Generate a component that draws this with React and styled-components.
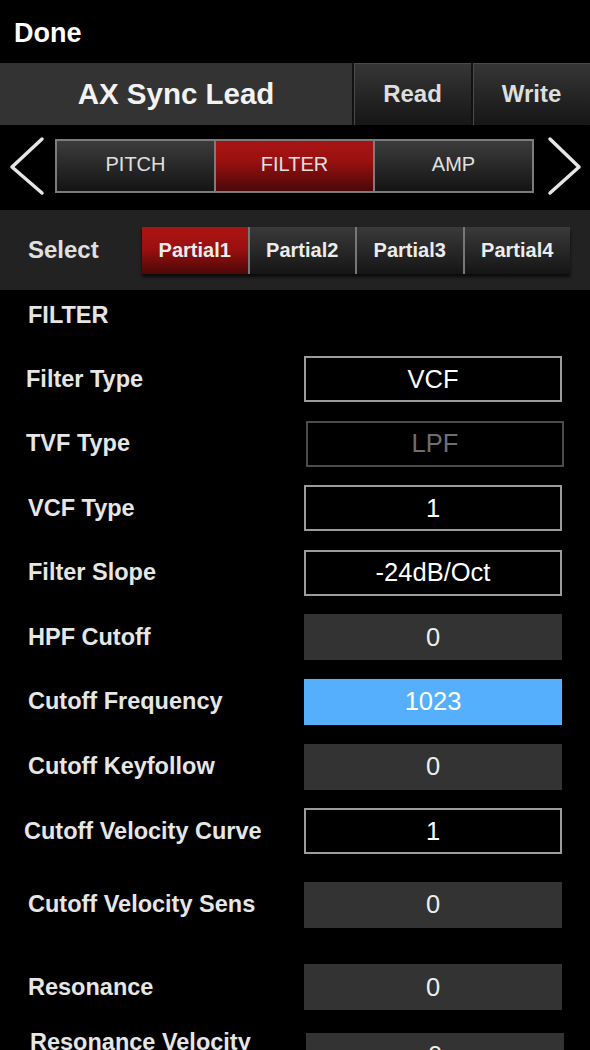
import React from "react";
import styled, { createGlobalStyle } from "styled-components";

const GlobalStyle = createGlobalStyle`
    body {
        margin: 0;
        background: #000;
        font-family: "Liberation Sans", Arial, sans-serif;
    }
`;

const Screen = styled.div`
    width: 590px;
    height: 1050px;
    overflow: hidden;
    background: #000;
    color: #e8e8e8;
`;

const TopBar = styled.div`
    height: 63px;
    display: flex;
    align-items: center;
    padding-left: 14px;
    padding-top: 3px;
    box-sizing: border-box;
    font-size: 27px;
    font-weight: bold;
    color: #fff;
`;

const Header = styled.div`
    height: 62px;
    display: flex;
    background: #333;
`;

const Title = styled.div`
    flex: 1;
    display: flex;
    align-items: center;
    justify-content: center;
    font-size: 29.5px;
    font-weight: bold;
    color: #f2f2f2;
`;

const HeaderButton = styled.div`
    width: 117px;
    display: flex;
    align-items: center;
    justify-content: center;
    border-left: 2px solid #111;
    box-shadow: inset 1px 1px 0 #4a4a4a;
    background: linear-gradient(#363636, #161616);
    font-size: 24px;
    font-weight: bold;
    color: #dedede;
`;

const NavRow = styled.div`
    height: 85px;
    display: flex;
    align-items: center;
    background: #000;
`;

const Arrow = styled.svg`
    flex: none;
    display: block;
`;

const TabStrip = styled.div`
    width: 479px;
    height: 54px;
    box-sizing: border-box;
    margin-bottom: 3px;
    display: flex;
    border: 2px solid #7c7c7c;
    background: #7c7c7c;
    gap: 2px;
`;

const Tab = styled.div`
    flex: 1;
    display: flex;
    align-items: center;
    justify-content: center;
    padding-bottom: 3px;
    font-size: 20px;
    color: #e0e0e0;
    background: ${(p) =>
        p.$active
            ? "linear-gradient(#a81414 0%, #9a1010 40%, #4a0808 100%)"
            : "linear-gradient(#3c3c3c, #141414)"};
`;

const SelectRow = styled.div`
    height: 80px;
    display: flex;
    align-items: center;
    background: #222;
`;

const SelectLabel = styled.div`
    width: 142px;
    box-sizing: border-box;
    padding-left: 28px;
    font-size: 24px;
    font-weight: bold;
    color: #e0e0e0;
`;

const PartialStrip = styled.div`
    width: 428px;
    height: 47px;
    display: flex;
    background: #777;
    gap: 2px;
    box-shadow: 0 3px 3px rgba(0, 0, 0, 0.7);
`;

const Partial = styled.div`
    flex: 1;
    display: flex;
    align-items: center;
    justify-content: center;
    font-size: 20px;
    font-weight: bold;
    color: #ececec;
    background: ${(p) =>
        p.$active
            ? "linear-gradient(#ac1414 0%, #9c1010 45%, #4c0808 100%)"
            : "linear-gradient(#3a3a3a, #151515)"};
`;

const SectionTitle = styled.div`
    height: 50px;
    line-height: 50px;
    padding-left: 28px;
    font-size: 23.5px;
    font-weight: bold;
    color: #e4e4e4;
`;

const ParamList = styled.div`
    padding-top: 16px;
    display: flex;
    flex-direction: column;
    gap: 18.6px;
`;

const ParamRow = styled.div`
    display: flex;
    align-items: center;
    margin-top: ${(p) => p.$extra || 0}px;
`;

const Label = styled.div`
    width: 304px;
    box-sizing: border-box;
    padding-left: ${(p) => p.$indent}px;
    padding-right: 30px;
    font-size: 23.5px;
    font-weight: bold;
    line-height: 27px;
    color: #e6e6e6;
`;

const boxLook = {
    outline: "background: #000; border: 2px solid #9c9c9c; color: #fff;",
    disabled: "background: #000; border: 2px solid #4c4c4c; color: #6e6e6e;",
    filled: "background: #333; border: 2px solid #333; color: #eee;",
    active: "background: #55affd; border: 2px solid #55affd; color: #fff;",
};

const ValueBox = styled.div`
    width: 258px;
    height: 46px;
    box-sizing: border-box;
    margin-left: ${(p) => p.$shift || 0}px;
    display: flex;
    align-items: center;
    justify-content: center;
    font-size: 25.5px;
    ${(p) => boxLook[p.$kind]}
`;

const params = [
    { label: "Filter Type", value: "VCF", kind: "outline", indent: 26 },
    { label: "TVF Type", value: "LPF", kind: "disabled", indent: 26, shift: 2 },
    { label: "VCF Type", value: "1", kind: "outline", indent: 28 },
    { label: "Filter Slope", value: "-24dB/Oct", kind: "outline", indent: 28 },
    { label: "HPF Cutoff", value: "0", kind: "filled", indent: 28 },
    { label: "Cutoff Frequency", value: "1023", kind: "active", indent: 28 },
    { label: "Cutoff Keyfollow", value: "0", kind: "filled", indent: 28 },
    { label: "Cutoff Velocity Curve", value: "1", kind: "outline", indent: 24 },
    { label: "Cutoff Velocity Sens", value: "0", kind: "filled", indent: 28, extra: 9 },
    { label: "Resonance", value: "0", kind: "filled", indent: 28, extra: 18 },
    { label: "Resonance Velocity Sens", value: "0", kind: "filled", indent: 30, shift: 2 },
];

function LeftArrow() {
    return (
        <Arrow width="55" height="85" viewBox="0 0 55 85">
            <path d="M42 14 L12 42 L42 68" fill="none" stroke="#e6e6e6" strokeWidth="3.5" strokeLinecap="round" strokeLinejoin="round" />
        </Arrow>
    );
}

function RightArrow() {
    return (
        <Arrow width="56" height="85" viewBox="0 0 56 85">
            <path d="M16 14 L45 42 L16 68" fill="none" stroke="#e6e6e6" strokeWidth="3.5" strokeLinecap="round" strokeLinejoin="round" />
        </Arrow>
    );
}

export default function App() {
    return (
        <>
        <GlobalStyle />
        <Screen>
            <TopBar>Done</TopBar>
            <Header>
                <Title>AX Sync Lead</Title>
                <HeaderButton>Read</HeaderButton>
                <HeaderButton>Write</HeaderButton>
            </Header>
            <NavRow>
                <LeftArrow />
                <TabStrip>
                    <Tab>PITCH</Tab>
                    <Tab $active>FILTER</Tab>
                    <Tab>AMP</Tab>
                </TabStrip>
                <RightArrow />
            </NavRow>
            <SelectRow>
                <SelectLabel>Select</SelectLabel>
                <PartialStrip>
                    {["Partial1", "Partial2", "Partial3", "Partial4"].map((name, idx) => (
                        <Partial $active={idx === 0} key={name}>{name}</Partial>
                    ))}
                </PartialStrip>
            </SelectRow>
            <SectionTitle>FILTER</SectionTitle>
            <ParamList>
                {params.map((param) => (
                    <ParamRow $extra={param.extra} key={param.label}>
                        <Label $indent={param.indent}>{param.label}</Label>
                        <ValueBox $kind={param.kind} $shift={param.shift}>{param.value}</ValueBox>
                    </ParamRow>
                ))}
            </ParamList>
        </Screen>
        </>
    );
}
